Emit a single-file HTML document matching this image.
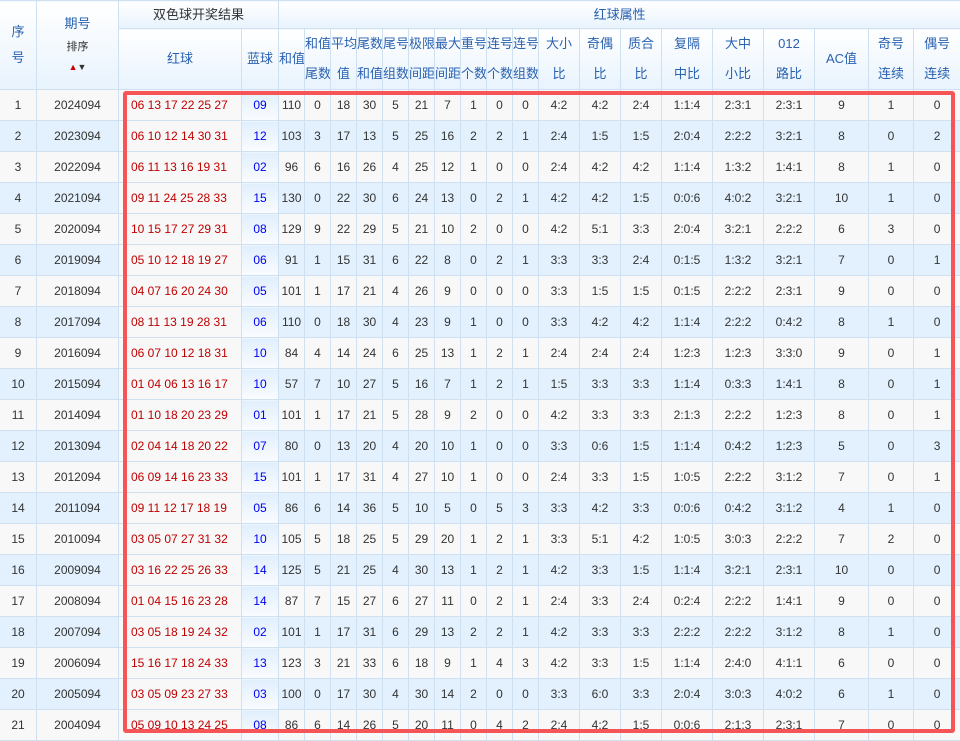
<!DOCTYPE html>
<html><head><meta charset="utf-8"><style>
html,body{margin:0;padding:0;background:#fff;}
body{width:960px;height:741px;overflow:hidden;position:relative;font-family:"Liberation Sans","Noto Sans CJK SC",sans-serif;}
table{border-collapse:collapse;table-layout:fixed;width:961px;margin-left:-1px;font-size:12px;color:#333;}
td,th{border:1px solid #cfe0f0;text-align:center;padding:0;white-space:nowrap;overflow:hidden;}
th{font-weight:normal;color:#2a62b0;background:linear-gradient(#ffffff,#e8f3fd);line-height:30px;font-size:13px;}
tr.h1 th{height:27px;line-height:26px;}
tr.h2 th{height:60px;}
tbody tr{height:31px;}
tbody tr:nth-child(odd) td{background:#f8f8f8;}
tbody tr:nth-child(even) td{background:#e2f1fd;}
tbody td.r{color:#c00000;text-align:left;padding-left:12px;background:#f8f8f8 !important;font-size:12px;}
tbody td.b{color:#0000ee;background:linear-gradient(#e0effd,#fafcff) !important;}
.sort{font-size:11px;color:#333;line-height:12px;display:block;margin-top:4px}
.ar{font-size:9px;line-height:9px;color:#333}
#box{position:absolute;left:123px;top:91px;width:824px;height:634px;border:4px solid #f55556;border-radius:3px;}
</style></head><body>
<table>
<colgroup><col style="width:37px"><col style="width:82px"><col style="width:123px"><col style="width:37px"><col style="width:26px"><col style="width:26px"><col style="width:26px"><col style="width:26px"><col style="width:26px"><col style="width:26px"><col style="width:26px"><col style="width:26px"><col style="width:26px"><col style="width:26px"><col style="width:41px"><col style="width:41px"><col style="width:41px"><col style="width:51px"><col style="width:51px"><col style="width:51px"><col style="width:54px"><col style="width:45px"><col style="width:47px"></colgroup>
<thead>
<tr class="h1"><th rowspan="2">序<br>号</th><th rowspan="2">期号<span class="sort">排序</span><span class="ar"><span style="color:#c00">▲</span>▼</span></th><th colspan="2" style="color:#333">双色球开奖结果</th><th colspan="19">红球属性</th></tr>
<tr class="h2"><th>红球</th><th>蓝球</th><th>和值</th><th>和值<br>尾数</th><th>平均<br>值</th><th>尾数<br>和值</th><th>尾号<br>组数</th><th>极限<br>间距</th><th>最大<br>间距</th><th>重号<br>个数</th><th>连号<br>个数</th><th>连号<br>组数</th><th>大小<br>比</th><th>奇偶<br>比</th><th>质合<br>比</th><th>复隔<br>中比</th><th>大中<br>小比</th><th>012<br>路比</th><th>AC值</th><th>奇号<br>连续</th><th>偶号<br>连续</th></tr>
</thead>
<tbody>
<tr><td>1</td><td>2024094</td><td class="r">06 13 17 22 25 27</td><td class="b">09</td><td>110</td><td>0</td><td>18</td><td>30</td><td>5</td><td>21</td><td>7</td><td>1</td><td>0</td><td>0</td><td>4:2</td><td>4:2</td><td>2:4</td><td>1:1:4</td><td>2:3:1</td><td>2:3:1</td><td>9</td><td>1</td><td>0</td></tr>
<tr><td>2</td><td>2023094</td><td class="r">06 10 12 14 30 31</td><td class="b">12</td><td>103</td><td>3</td><td>17</td><td>13</td><td>5</td><td>25</td><td>16</td><td>2</td><td>2</td><td>1</td><td>2:4</td><td>1:5</td><td>1:5</td><td>2:0:4</td><td>2:2:2</td><td>3:2:1</td><td>8</td><td>0</td><td>2</td></tr>
<tr><td>3</td><td>2022094</td><td class="r">06 11 13 16 19 31</td><td class="b">02</td><td>96</td><td>6</td><td>16</td><td>26</td><td>4</td><td>25</td><td>12</td><td>1</td><td>0</td><td>0</td><td>2:4</td><td>4:2</td><td>4:2</td><td>1:1:4</td><td>1:3:2</td><td>1:4:1</td><td>8</td><td>1</td><td>0</td></tr>
<tr><td>4</td><td>2021094</td><td class="r">09 11 24 25 28 33</td><td class="b">15</td><td>130</td><td>0</td><td>22</td><td>30</td><td>6</td><td>24</td><td>13</td><td>0</td><td>2</td><td>1</td><td>4:2</td><td>4:2</td><td>1:5</td><td>0:0:6</td><td>4:0:2</td><td>3:2:1</td><td>10</td><td>1</td><td>0</td></tr>
<tr><td>5</td><td>2020094</td><td class="r">10 15 17 27 29 31</td><td class="b">08</td><td>129</td><td>9</td><td>22</td><td>29</td><td>5</td><td>21</td><td>10</td><td>2</td><td>0</td><td>0</td><td>4:2</td><td>5:1</td><td>3:3</td><td>2:0:4</td><td>3:2:1</td><td>2:2:2</td><td>6</td><td>3</td><td>0</td></tr>
<tr><td>6</td><td>2019094</td><td class="r">05 10 12 18 19 27</td><td class="b">06</td><td>91</td><td>1</td><td>15</td><td>31</td><td>6</td><td>22</td><td>8</td><td>0</td><td>2</td><td>1</td><td>3:3</td><td>3:3</td><td>2:4</td><td>0:1:5</td><td>1:3:2</td><td>3:2:1</td><td>7</td><td>0</td><td>1</td></tr>
<tr><td>7</td><td>2018094</td><td class="r">04 07 16 20 24 30</td><td class="b">05</td><td>101</td><td>1</td><td>17</td><td>21</td><td>4</td><td>26</td><td>9</td><td>0</td><td>0</td><td>0</td><td>3:3</td><td>1:5</td><td>1:5</td><td>0:1:5</td><td>2:2:2</td><td>2:3:1</td><td>9</td><td>0</td><td>0</td></tr>
<tr><td>8</td><td>2017094</td><td class="r">08 11 13 19 28 31</td><td class="b">06</td><td>110</td><td>0</td><td>18</td><td>30</td><td>4</td><td>23</td><td>9</td><td>1</td><td>0</td><td>0</td><td>3:3</td><td>4:2</td><td>4:2</td><td>1:1:4</td><td>2:2:2</td><td>0:4:2</td><td>8</td><td>1</td><td>0</td></tr>
<tr><td>9</td><td>2016094</td><td class="r">06 07 10 12 18 31</td><td class="b">10</td><td>84</td><td>4</td><td>14</td><td>24</td><td>6</td><td>25</td><td>13</td><td>1</td><td>2</td><td>1</td><td>2:4</td><td>2:4</td><td>2:4</td><td>1:2:3</td><td>1:2:3</td><td>3:3:0</td><td>9</td><td>0</td><td>1</td></tr>
<tr><td>10</td><td>2015094</td><td class="r">01 04 06 13 16 17</td><td class="b">10</td><td>57</td><td>7</td><td>10</td><td>27</td><td>5</td><td>16</td><td>7</td><td>1</td><td>2</td><td>1</td><td>1:5</td><td>3:3</td><td>3:3</td><td>1:1:4</td><td>0:3:3</td><td>1:4:1</td><td>8</td><td>0</td><td>1</td></tr>
<tr><td>11</td><td>2014094</td><td class="r">01 10 18 20 23 29</td><td class="b">01</td><td>101</td><td>1</td><td>17</td><td>21</td><td>5</td><td>28</td><td>9</td><td>2</td><td>0</td><td>0</td><td>4:2</td><td>3:3</td><td>3:3</td><td>2:1:3</td><td>2:2:2</td><td>1:2:3</td><td>8</td><td>0</td><td>1</td></tr>
<tr><td>12</td><td>2013094</td><td class="r">02 04 14 18 20 22</td><td class="b">07</td><td>80</td><td>0</td><td>13</td><td>20</td><td>4</td><td>20</td><td>10</td><td>1</td><td>0</td><td>0</td><td>3:3</td><td>0:6</td><td>1:5</td><td>1:1:4</td><td>0:4:2</td><td>1:2:3</td><td>5</td><td>0</td><td>3</td></tr>
<tr><td>13</td><td>2012094</td><td class="r">06 09 14 16 23 33</td><td class="b">15</td><td>101</td><td>1</td><td>17</td><td>31</td><td>4</td><td>27</td><td>10</td><td>1</td><td>0</td><td>0</td><td>2:4</td><td>3:3</td><td>1:5</td><td>1:0:5</td><td>2:2:2</td><td>3:1:2</td><td>7</td><td>0</td><td>1</td></tr>
<tr><td>14</td><td>2011094</td><td class="r">09 11 12 17 18 19</td><td class="b">05</td><td>86</td><td>6</td><td>14</td><td>36</td><td>5</td><td>10</td><td>5</td><td>0</td><td>5</td><td>3</td><td>3:3</td><td>4:2</td><td>3:3</td><td>0:0:6</td><td>0:4:2</td><td>3:1:2</td><td>4</td><td>1</td><td>0</td></tr>
<tr><td>15</td><td>2010094</td><td class="r">03 05 07 27 31 32</td><td class="b">10</td><td>105</td><td>5</td><td>18</td><td>25</td><td>5</td><td>29</td><td>20</td><td>1</td><td>2</td><td>1</td><td>3:3</td><td>5:1</td><td>4:2</td><td>1:0:5</td><td>3:0:3</td><td>2:2:2</td><td>7</td><td>2</td><td>0</td></tr>
<tr><td>16</td><td>2009094</td><td class="r">03 16 22 25 26 33</td><td class="b">14</td><td>125</td><td>5</td><td>21</td><td>25</td><td>4</td><td>30</td><td>13</td><td>1</td><td>2</td><td>1</td><td>4:2</td><td>3:3</td><td>1:5</td><td>1:1:4</td><td>3:2:1</td><td>2:3:1</td><td>10</td><td>0</td><td>0</td></tr>
<tr><td>17</td><td>2008094</td><td class="r">01 04 15 16 23 28</td><td class="b">14</td><td>87</td><td>7</td><td>15</td><td>27</td><td>6</td><td>27</td><td>11</td><td>0</td><td>2</td><td>1</td><td>2:4</td><td>3:3</td><td>2:4</td><td>0:2:4</td><td>2:2:2</td><td>1:4:1</td><td>9</td><td>0</td><td>0</td></tr>
<tr><td>18</td><td>2007094</td><td class="r">03 05 18 19 24 32</td><td class="b">02</td><td>101</td><td>1</td><td>17</td><td>31</td><td>6</td><td>29</td><td>13</td><td>2</td><td>2</td><td>1</td><td>4:2</td><td>3:3</td><td>3:3</td><td>2:2:2</td><td>2:2:2</td><td>3:1:2</td><td>8</td><td>1</td><td>0</td></tr>
<tr><td>19</td><td>2006094</td><td class="r">15 16 17 18 24 33</td><td class="b">13</td><td>123</td><td>3</td><td>21</td><td>33</td><td>6</td><td>18</td><td>9</td><td>1</td><td>4</td><td>3</td><td>4:2</td><td>3:3</td><td>1:5</td><td>1:1:4</td><td>2:4:0</td><td>4:1:1</td><td>6</td><td>0</td><td>0</td></tr>
<tr><td>20</td><td>2005094</td><td class="r">03 05 09 23 27 33</td><td class="b">03</td><td>100</td><td>0</td><td>17</td><td>30</td><td>4</td><td>30</td><td>14</td><td>2</td><td>0</td><td>0</td><td>3:3</td><td>6:0</td><td>3:3</td><td>2:0:4</td><td>3:0:3</td><td>4:0:2</td><td>6</td><td>1</td><td>0</td></tr>
<tr><td>21</td><td>2004094</td><td class="r">05 09 10 13 24 25</td><td class="b">08</td><td>86</td><td>6</td><td>14</td><td>26</td><td>5</td><td>20</td><td>11</td><td>0</td><td>4</td><td>2</td><td>2:4</td><td>4:2</td><td>1:5</td><td>0:0:6</td><td>2:1:3</td><td>2:3:1</td><td>7</td><td>0</td><td>0</td></tr>
</tbody>
</table>
<div id="box"></div>
</body></html>
